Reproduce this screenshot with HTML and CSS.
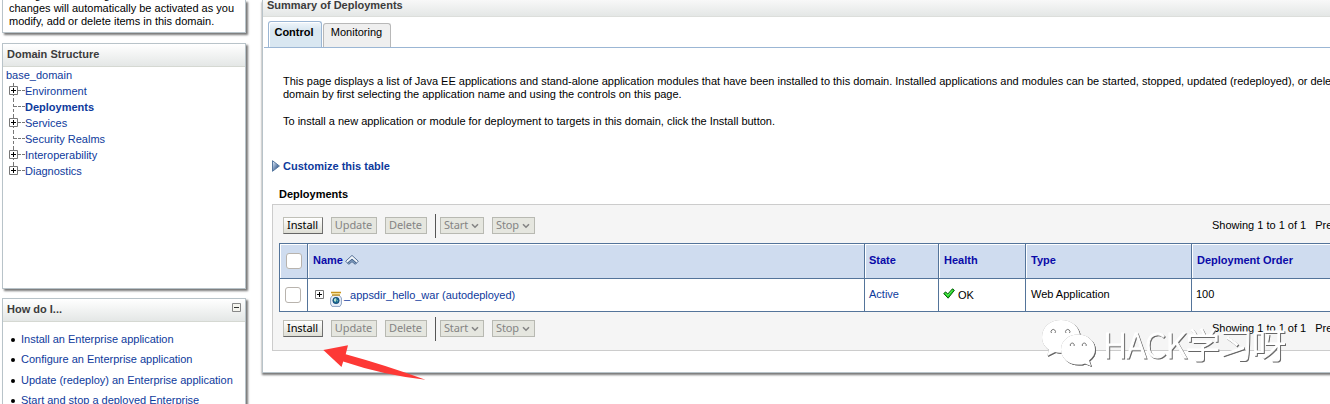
FILE: index.html
```html
<!DOCTYPE html>
<html lang="en">
<head>
<meta charset="utf-8">
<title>Summary of Deployments</title>
<link rel="stylesheet" href="styles.css">
</head>
<body>
<svg class="defs" width="0" height="0" aria-hidden="true">
  <defs>
    <linearGradient id="blue" x1="0" y1="0" x2="1" y2="1"><stop offset="0.1" stop-color="#d4e4f6"/><stop offset="0.8" stop-color="#2c5084"/></linearGradient>
    <symbol id="plus" viewBox="0 0 9 9"><path d="M.5 .5h8v8h-8z" fill="#fff" stroke="#777"/><path d="M2 4.5h5M4.5 2v5" stroke="#000"/></symbol>
    <symbol id="chevron" viewBox="0 0 8 6"><path d="M1 1.2L4 4.2 7 1.2" fill="none" stroke="#848484" stroke-width="1.6"/></symbol>
  </defs>
</svg>
<div class="page">
  <aside class="side">
    <section class="panel changes"><p>Configuration editing is enabled. Future<br>changes will automatically be activated as you<br>modify, add or delete items in this domain.</p></section>
    <section class="panel domain">
      <h2>Domain Structure</h2>
      <a class="root">base_domain</a>
      <ul class="tree">
        <li class="branch"><svg class="box"><use href="#plus"/></svg><a>Environment</a></li>
        <li><a class="current">Deployments</a></li>
        <li class="branch"><svg class="box"><use href="#plus"/></svg><a>Services</a></li>
        <li><a>Security Realms</a></li>
        <li class="branch"><svg class="box"><use href="#plus"/></svg><a>Interoperability</a></li>
        <li class="branch last"><svg class="box"><use href="#plus"/></svg><a>Diagnostics</a></li>
      </ul>
    </section>
    <section class="panel howto">
      <h2>How do I...<svg class="minus" viewBox="0 0 9 9"><path d="M.5 .5h8v8h-8z" fill="#f4f4ee" stroke="#888"/><path d="M2 4.5h5" stroke="#333"/></svg></h2>
      <ul class="links">
        <li><a>Install an Enterprise application</a></li>
        <li><a>Configure an Enterprise application</a></li>
        <li><a>Update (redeploy) an Enterprise application</a></li>
        <li><a>Start and stop a deployed Enterprise</a></li>
      </ul>
    </section>
  </aside>
  <main class="main">
    <h1>Summary of Deployments</h1>
    <nav class="tabs"><a class="tab active">Control</a><a class="tab">Monitoring</a></nav>
    <div class="intro">
      <p>This page displays a list of Java EE applications and stand-alone application modules that have been installed to this domain. Installed applications and modules can be started, stopped, updated (redeployed), or deleted from the<br>domain by first selecting the application name and using the controls on this page.</p>
      <p>To install a new application or module for deployment to targets in this domain, click the Install button.</p>
    </div>
    <a class="customize"><svg viewBox="0 0 8 12"><path d="M.5 .7L7.4 6 .5 11.3z" fill="url(#blue)" stroke="#55779f"/></svg>Customize this table</a>
    <h3>Deployments</h3>
    <div class="listing">
      <div class="toolbar">
        <button class="on">Install</button><button class="update">Update</button><button class="delete">Delete</button><i class="divider"></i><button class="start">Start<svg><use href="#chevron"/></svg></button><button class="stop">Stop<svg><use href="#chevron"/></svg></button>
        <span class="count">Showing 1 to 1 of 1</span><span class="prev">Previous</span>
      </div>
      <div class="table">
        <div class="row head">
          <div class="cell"><i class="check"></i></div>
          <div class="cell">Name<svg class="sort" viewBox="0 0 14 10"><path d="M.7 6.2L7 .4l6.300 5.800-1.700 1.800L7 4 2.400 8z" fill="#f0f5fa" stroke="#36557f" stroke-width=".8"/><path d="M2.700 8.300L7 4.500l4.300 3.800-1 1L7 6.700 3.700 9.300z" fill="#8eaac9" stroke="#36557f" stroke-width=".8"/></svg></div>
          <div class="cell">State</div><div class="cell">Health</div><div class="cell">Type</div><div class="cell">Deployment Order</div>
        </div>
        <div class="row">
          <div class="cell"><i class="check"></i></div>
          <div class="cell name"><svg class="box"><use href="#plus"/></svg><svg class="jar" viewBox="0 0 12 16"><path d="M3 4h6l2.4 3v6L10 15.4H2L.6 13V7z" fill="#e9f0fa" stroke="#8ba0c2"/><path d="M1 1.5h10M2 4h8" stroke="#c89420" stroke-width="1.5"/><path d="M1.5 2.7h9" stroke="#f7df8a"/><circle cx="6" cy="9.5" r="3.2" fill="#176a91" stroke="#174173" stroke-width=".7"/><path d="M4 8l2-1 .5 2-1 2-1.5-1zM7 10l1-1v1.5z" fill="#b9e1c9"/></svg><a>_appsdir_hello_war (autodeployed)</a></div>
          <div class="cell"><a>Active</a></div>
          <div class="cell health"><svg viewBox="0 0 12 11"><path d="M.7 5.5l2-1.6 2 2.2L9.5.8l1.9 1.5-6.3 7.9z" fill="#1ed324" stroke="#075c0a"/><path d="M2.7 5.3l2 2.2L9.4 2.2" fill="none" stroke="#8cff80" stroke-width=".7"/></svg><span>OK</span></div>
          <div class="cell type">Web Application</div><div class="cell">100</div>
        </div>
      </div>
      <div class="toolbar bottom">
        <button class="on">Install</button><button class="update">Update</button><button class="delete">Delete</button><i class="divider"></i><button class="start">Start<svg><use href="#chevron"/></svg></button><button class="stop">Stop<svg><use href="#chevron"/></svg></button>
        <span class="count">Showing 1 to 1 of 1</span><span class="prev">Previous</span>
      </div>
    </div>
  </main>
</div>
<svg class="arrow" viewBox="0 0 104 36"><path d="M.3 5L25 .3l-2.300 8.900Q62 20 102.500 34.700 60 30 20.200 16.500L18.500 22z" fill="#fd3936"/></svg>
<svg class="watermark" viewBox="0 0 260 60">
  <g class="bubbles" fill="#fff">
    <path d="M21 5C10 5 2 12 2 22c0 6 3 10 7 13l-2 6 8-4c3 1 7 1 11 0C36 35 40 29 40 22 40 12 32 5 21 5z"/>
    <path d="M38 19.5c-9 0-17 6-17 15s8 15 17 15c3 0 5 0 7-1l6 2.5-2-5.500c4-3 6-7 6-11 0-9-8-15-17-15z"/>
  </g>
  <g fill="#fff" stroke="#666" stroke-width=".9"><path d="M11.500 18a2.200 2.200 0 1 1 3.500 0M26 18a2.200 2.200 0 1 1 3.500 0M30.500 31a2 2 0 1 1 3.500 0M42.500 31a2 2 0 1 1 3.500 0"/></g>
  <text x="63" y="43" textLength="183">HACK学习呀</text>
</svg>
</body>
</html>
```
FILE: styles.css
```css
* { box-sizing: border-box; }
body { margin: 0; width: 1330px; height: 404px; overflow: hidden; position: relative; background: #fff; color: #000; font: 11px/13px "Liberation Sans", Arial, sans-serif; }
h1, h2, h3, p, ul { margin: 0; padding: 0; }
ul { list-style: none; }
a { color: #0e3a9c; }
svg { flex: none; }
.defs { position: absolute; }
.page { display: flex; gap: 16px; height: 404px; overflow: hidden; }
.side { width: 246px; padding-left: 2px; flex: none; }
.panel { width: 244px; border: 1px solid #b8c3c9; box-shadow: 2px 2px 2px #777; background: #fff; }
.changes { height: 33px; overflow: hidden; display: flex; align-items: flex-end; border-top: 0; padding: 0 0 4px 6px; white-space: nowrap; }
.domain { height: 246px; margin-top: 10px; }
.domain h2 { padding-bottom: 2px; }
.howto { height: 130px; margin-top: 9px; }
h2 { height: 23px; padding: 0 4px; display: flex; align-items: center; justify-content: space-between; font-size: 11px; color: #3c3c3c; background: linear-gradient(#fff, #e4e7e6); border-bottom: 1px solid #d5d8d2; }
.howto h2 { padding-bottom: 2px; }
.root { display: block; padding: 2px 3px 0; height: 16px; }
.tree li { height: 16px; display: flex; align-items: center; padding-left: 22px; background: repeating-linear-gradient(#777 0 3px, transparent 3px 5px) 10px 0 / 1px 16px no-repeat, repeating-linear-gradient(90deg, #777 0 3px, transparent 3px 4px) 11px 7px / 11px 1px no-repeat; }
.tree .last { background-size: 1px 8px, 11px 1px; }
.box { width: 9px; height: 9px; }
.tree .box { margin: -1px 7px 0 -16px; }
.tree .current { font-weight: bold; }
.minus { width: 9px; height: 9px; margin: -3px 0 0 0; }
.links { padding: 7px 0 0 18px; }
.links li { height: 20.3px; line-height: 20px; white-space: nowrap; display: flex; align-items: center; }
.links a { letter-spacing: -.01px; }
.links li::before { content: ""; width: 4px; height: 4px; border-radius: 50%; background: #000; margin: 2px 6px 0 -10px; }
.main { width: 1090px; flex: none; height: 373px; border: solid #b8c3c9; border-width: 0 0 1px 1px; box-shadow: 0 2px 2px #777; }
h1 { font-size: 11px; line-height: 13px; color: #3c3c3c; height: 17px; padding: 0 4px 4px; background: linear-gradient(#f8f8f8, #e4e7e6); border-bottom: 1px solid #dcdedb; display: flex; align-items: flex-end; }
.tabs { height: 31px; display: flex; align-items: flex-end; gap: 1px; padding-left: 4px; margin-left: 1px; border-bottom: 1px solid #9bb6d4; }
.tab { height: 24px; width: 68px; padding: 2px 1px 0 0; text-align: center; color: #000; background: #efefef; border: 1px solid #b8b8b8; border-bottom: 0; border-radius: 3px 3px 0 0; }
.tab.active { height: 26px; width: 54px; padding: 4px 2px 0 0; font-weight: bold; background: linear-gradient(#f0f6fb, #d9e7f1 8px); border-color: #9bb6d4; box-shadow: inset 1px 1px #fff; }
.intro { padding: 27px 0 0 20px; height: 112px; white-space: nowrap; letter-spacing: -.008px; }
.intro p + p { margin-top: 14px; }
.customize { display: flex; align-items: center; gap: 3px; height: 13px; padding-left: 9px; font-weight: bold; }
.customize svg { width: 8px; height: 12px; margin-top: -1px; }
h3 { font-size: 11px; margin: 15px 0 3px 16px; height: 13px; line-height: 13px; }
.listing { margin-left: 9px; height: 147px; border: 1px solid #ccc; background: #f5f5f5; padding-left: 6px; }
.toolbar { height: 38px; display: flex; align-items: center; padding: 3px 0 0 4px; width: 1090px; }
.toolbar.bottom { height: 33px; padding-top: 0; }
button { height: 17px; flex: none; margin: 0 8px 0 0; padding: 0 1px 2px 0; display: flex; align-items: center; justify-content: center; gap: 3px; font: 11px/13px "Noto Sans", sans-serif; letter-spacing: -.1px; color: #848484; background: #e5e6df; border: 1px solid #b8b9b2; }
button svg { width: 8px; height: 6px; margin-top: 2px; }
.on { width: 40px; color: #000; background: linear-gradient(#fff, #deded5); border-color: #c0c0b8 #707070 #666 #c0c0b8; }
.update { width: 46px; }
.delete { width: 42px; }
.start { width: 44px; }
.stop { width: 43px; }
.divider { width: 1px; flex: none; height: 24px; background: #555; margin-right: 4px; }
.count { margin-left: 669px; flex: none; }
.prev { margin-left: 9px; }
.table { border: solid #54749a; border-width: 1px 0 0 1px; background: #fff; width: 1060px; }
.row { display: grid; grid-template-columns: 28px 557px 74px 87px 166px 148px; height: 33px; }
.cell { display: flex; align-items: center; border: solid #54749a; border-width: 0 1px 1px 0; padding: 0 0 1px 4px; }
.head { height: 35px; }
.head .cell { background: #cfdcef; color: #0a0aa8; font-weight: bold; box-shadow: inset 1px 1px #fff; padding: 0 0 2px 5px; }
.row .cell:first-child { padding: 0 0 0 5px; }
.head .cell:first-child { padding-left: 6px; }
.head .cell:nth-child(3) { padding-left: 4px; }
.row .type { padding-left: 5px; }
.check { width: 16px; height: 16px; border: 1px solid #b8b3ad; border-radius: 3px; background: #fff; }
.sort { width: 14px; height: 10px; margin: -1px 0 0 2px; }
.row .name { padding: 0 0 0 7px; letter-spacing: -.02px; }
.name .box { margin-top: -1px; }
.jar { width: 12px; height: 16px; margin: 8px 2px 0 6px; }
.health svg { width: 12px; height: 11px; margin: -3px 3px 0 0; }
.health span { margin-top: 2px; }
.arrow { position: absolute; left: 323px; top: 345px; width: 104px; height: 36px; }
.watermark { position: absolute; left: 1040px; top: 315px; width: 260px; height: 60px; filter: drop-shadow(1px 1px .4px #666); }
.watermark text { font: 300 34px "Noto Sans CJK SC", sans-serif; fill: #fff; stroke: #fff; stroke-width: 1px; }
.bubbles path { filter: drop-shadow(0 0 .5px #999); }
```
